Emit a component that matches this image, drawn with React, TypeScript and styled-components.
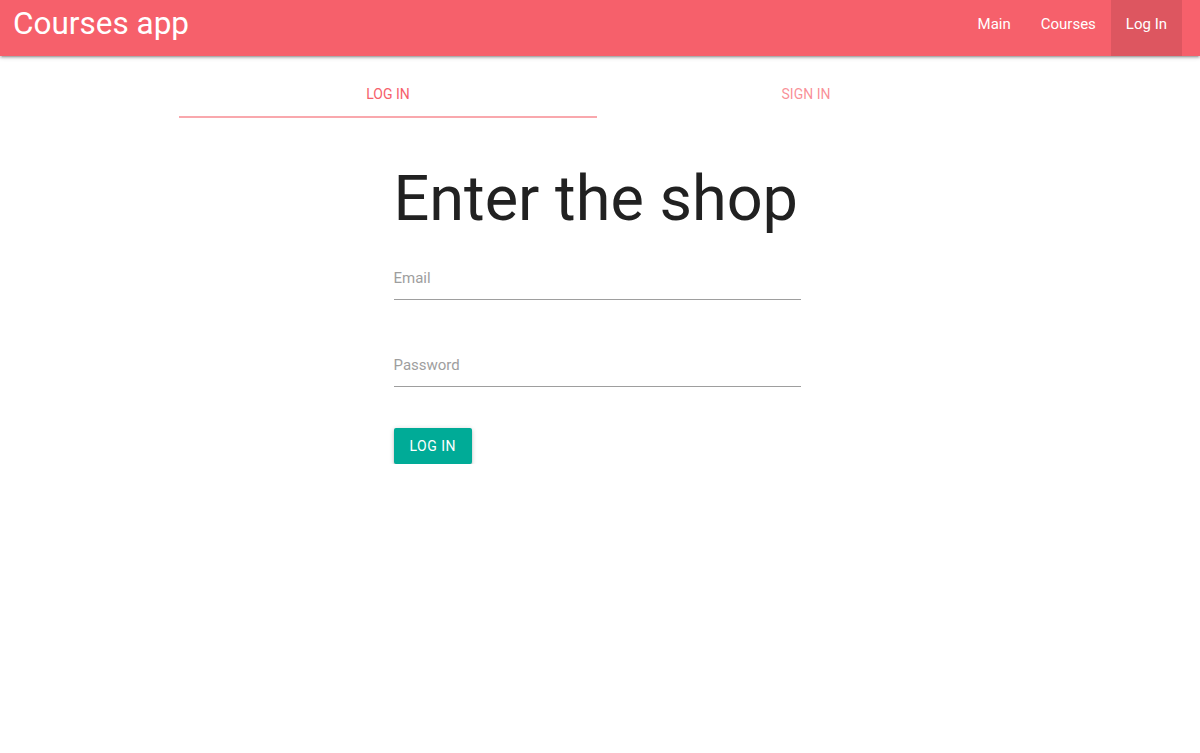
import React from "react";
import styled, { createGlobalStyle } from "styled-components";

const Global = createGlobalStyle`
  html, body { margin: 0; padding: 0; background: #fff; }
  body { font-family: Roboto, "Liberation Sans", sans-serif; color: rgba(0,0,0,0.87); }
  * { box-sizing: border-box; }
`;

const Nav = styled.nav`
  height: 56px;
  background: #f6606b;
  display: flex;
  align-items: flex-start;
  justify-content: space-between;
  padding: 0 18px 0 13px;
  box-shadow: 0 2px 2px 0 rgba(0,0,0,0.14), 0 3px 1px -2px rgba(0,0,0,0.12), 0 1px 5px 0 rgba(0,0,0,0.2);
  position: relative;
  z-index: 1;
`;

const Brand = styled.a`
  color: #fff;
  font-size: 31.5px;
  line-height: 48px;
  text-decoration: none;
`;

const NavList = styled.ul`
  list-style: none;
  margin: 0;
  padding: 0;
  display: flex;
  height: 100%;
`;

const NavLink = styled.a<{ $active?: boolean }>`
  display: block;
  height: 56px;
  line-height: 48px;
  padding: 0 15px;
  color: #fff;
  font-size: 15px;
  text-decoration: none;
  background: ${(p) => (p.$active ? "rgba(0,0,0,0.1)" : "transparent")};
`;

const Main = styled.main`
  padding: 14px 185px 0 179px;
`;

const Tabs = styled.div`
  display: flex;
  height: 48px;
`;

const Tab = styled.a<{ $active?: boolean }>`
  flex: 1;
  display: flex;
  align-items: center;
  justify-content: center;
  font-size: 14px;
  text-transform: uppercase;
  text-decoration: none;
  color: ${(p) => (p.$active ? "#f6606b" : "rgba(246,96,107,0.7)")};
  border-bottom: 2px solid ${(p) => (p.$active ? "#f9a8ad" : "transparent")};
  padding-top: 2px;
`;

const Form = styled.form`
  width: 407px;
  margin: 46px auto 0;
  display: flex;
  flex-direction: column;
`;

const Heading = styled.h1`
  white-space: nowrap;
  margin: 0 0 20px;
  font-size: 63px;
  font-weight: 400;
  line-height: 69px;
  color: #212121;
`;

const Input = styled.input<{ $gap?: number }>`
  height: 47px;
  border: none;
  border-bottom: 1px solid #9e9e9e;
  outline: none;
  padding: 4px 0 0;
  font-family: Roboto, "Liberation Sans", sans-serif;
  font-size: 15px;
  color: #212121;
  margin-bottom: ${(p) => p.$gap ?? 0}px;
  &::placeholder { color: #9e9e9e; }
`;

const Button = styled.button`
  align-self: flex-start;
  height: 36px;
  padding: 0 16px;
  border: none;
  border-radius: 2px;
  background: #00ab97;
  color: #fff;
  font-family: Roboto, "Liberation Sans", sans-serif;
  font-size: 14px;
  letter-spacing: 0.5px;
  text-transform: uppercase;
  box-shadow: 0 2px 2px 0 rgba(0,0,0,0.14), 0 3px 1px -2px rgba(0,0,0,0.12), 0 1px 5px 0 rgba(0,0,0,0.2);
  cursor: pointer;
`;

export default function App() {
  return (
    <>
      <Global />
      <Nav>
        <Brand href="#">Courses app</Brand>
        <NavList>
          <li><NavLink href="#">Main</NavLink></li>
          <li><NavLink href="#">Courses</NavLink></li>
          <li><NavLink href="#" $active>Log In</NavLink></li>
        </NavList>
      </Nav>
      <Main>
        <Tabs>
          <Tab href="#" $active>Log in</Tab>
          <Tab href="#">Sign in</Tab>
        </Tabs>
        <Form onSubmit={(e) => e.preventDefault()}>
          <Heading>Enter the shop</Heading>
          <Input type="email" placeholder="Email" $gap={40} />
          <Input type="password" placeholder="Password" $gap={41} />
          <Button type="submit">Log in</Button>
        </Form>
      </Main>
    </>
  );
}
